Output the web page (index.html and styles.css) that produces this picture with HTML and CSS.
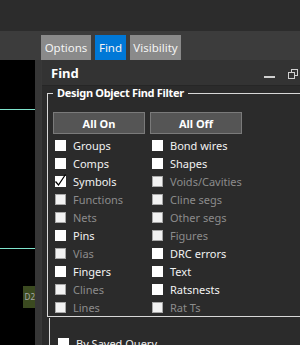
FILE: index.html
```html
<!DOCTYPE html>
<html lang="en">

<head>
    <meta charset="UTF-8">
    <meta name="viewport" content="width=device-width, initial-scale=1.0">
    <title>Find</title>
    <link rel="stylesheet" href="styles.css">
</head>

<body>
    <div class="topbar"></div>

    <!-- Tab strip -->
    <div class="tabbar">
        <div class="tab tab-options">Options</div>
        <div class="tab tab-find active">Find</div>
        <div class="tab tab-visibility">Visibility</div>
    </div>

    <div class="main">
        <!-- Design canvas -->
        <div class="canvas">
            <div class="trace trace-a"></div>
            <div class="trace trace-b"></div>
            <div class="ref">D2</div>
        </div>
        <div class="splitter"></div>

        <!-- Find panel -->
        <div class="panel">
            <div class="panel-head">
                <span class="panel-title">Find</span>
                <div class="panel-icons">
                    <svg width="11" height="12" viewBox="0 0 11 12">
                        <rect x="0" y="9" width="11" height="2" fill="#d0d0d0" />
                    </svg>
                    <svg width="10" height="12" viewBox="0 0 10 12">
                        <rect x="3.5" y="2.5" width="6" height="6" fill="none" stroke="#d0d0d0" />
                        <rect x="0.5" y="5.5" width="6" height="6" fill="#333" stroke="#d0d0d0" />
                    </svg>
                </div>
            </div>

            <div class="panel-body">
                <fieldset class="group">
                    <legend>Design Object Find Filter</legend>
                    <div class="buttons">
                        <button type="button">All On</button>
                        <button type="button">All Off</button>
                    </div>
                    <div class="filters">
                        <label class="row"><span class="box"></span>Groups</label>
                        <label class="row"><span class="box"></span>Bond wires</label>
                        <label class="row"><span class="box"></span>Comps</label>
                        <label class="row"><span class="box"></span>Shapes</label>
                        <label class="row"><span class="box checked"><svg width="13" height="13" viewBox="0 0 13 13"><path d="M1.5 7.5 L4.5 11 L11.5 0.5" fill="none" stroke="#000" stroke-width="1.3" /></svg></span>Symbols</label>
                        <label class="row off"><span class="box"></span>Voids/Cavities</label>
                        <label class="row off"><span class="box"></span>Functions</label>
                        <label class="row off"><span class="box"></span>Cline segs</label>
                        <label class="row off"><span class="box"></span>Nets</label>
                        <label class="row off"><span class="box"></span>Other segs</label>
                        <label class="row"><span class="box"></span>Pins</label>
                        <label class="row off"><span class="box"></span>Figures</label>
                        <label class="row off"><span class="box"></span>Vias</label>
                        <label class="row"><span class="box"></span>DRC errors</label>
                        <label class="row"><span class="box"></span>Fingers</label>
                        <label class="row"><span class="box"></span>Text</label>
                        <label class="row off"><span class="box"></span>Clines</label>
                        <label class="row"><span class="box"></span>Ratsnests</label>
                        <label class="row off"><span class="box"></span>Lines</label>
                        <label class="row off"><span class="box"></span>Rat Ts</label>
                    </div>
                </fieldset>

                <div class="query">
                    <label class="row"><span class="box"></span>By Saved Query</label>
                </div>
            </div>
        </div>
    </div>
</body>

</html>
```

FILE: styles.css
```css
body {
    font-family: 'Noto Sans', sans-serif;
    font-size: 11px;
    margin: 0;
    padding: 0;
    width: 300px;
    height: 345px;
    overflow: hidden;
    background: #2b2b2b;
    color: #f2f2f2;
}

.topbar {
    height: 31px;
    background: #2c2c2c;
}

.tabbar {
    height: 29px;
    background: #3c3c3c;
    display: flex;
    align-items: flex-end;
    gap: 4px;
    padding-left: 41px;
}

.tab {
    height: 25px;
    line-height: 25px;
    text-align: center;
    background: #8a8a8a;
    color: #f4f4f4;
    font-size: 11.5px;
}

.tab-options {
    width: 50px;
}

.tab-find {
    width: 31px;
}

.tab-visibility {
    width: 51px;
}

.tab.active {
    background: #0078d7;
}

.main {
    display: flex;
    height: 285px;
}

.canvas {
    width: 35px;
    background: #000;
    position: relative;
}

.trace {
    position: absolute;
    left: 0;
    right: 0;
    height: 1px;
    background: #7fe3cc;
}

.trace-a {
    top: 49px;
}

.trace-b {
    top: 188px;
}

.ref {
    position: absolute;
    left: 23px;
    top: 226px;
    width: 12px;
    height: 22px;
    background: #3b4a20;
    color: #a8a8a8;
    font-size: 8px;
    line-height: 22px;
    text-align: right;
}

.splitter {
    width: 6px;
    background: #363636;
}

.panel {
    flex: 1;
    overflow: hidden;
    background: #2b2b2b;
    border-left: 1px solid #383838;
}

.panel-head {
    height: 25px;
    border-bottom: 1px solid #262626;
    background: #333333;
    display: flex;
    align-items: center;
    padding-left: 9px;
}

.panel-title {
    font-weight: bold;
    font-size: 13px;
    color: #fff;
}

.panel-icons {
    margin-left: auto;
    display: flex;
    gap: 13px;
    padding-right: 2px;
}

.panel-body {
    padding-left: 5px;
}

.group {
    width: 300px;
    margin: 0;
    padding: 12px 0 0 5px;
    border: 1px solid #d8d8d8;
}

.group legend {
    padding: 0 4px;
    font-weight: bold;
    line-height: 14px;
    letter-spacing: -0.3px;
    color: #fff;
}

.buttons {
    display: flex;
    gap: 5px;
}

button {
    width: 92px;
    height: 22px;
    padding: 0;
    background: #555555;
    border: 1px solid #7a7a7a;
    color: #fff;
    font-family: inherit;
    font-size: 11px;
    font-weight: bold;
}

.filters {
    display: grid;
    grid-template-columns: 97px 97px;
    margin-top: 2px;
}

.row {
    height: 18px;
    display: flex;
    align-items: center;
    gap: 7px;
    padding-left: 2px;
    white-space: nowrap;
}

.row.off {
    color: #8c8c8c;
}

.box {
    width: 11px;
    height: 11px;
    background: #fff;
    box-sizing: border-box;
    position: relative;
    flex: none;
}

.row.off .box {
    border: 1px solid #a8a8a8;
    background: #f2f2f2;
}

.box svg {
    position: absolute;
    left: -1px;
    top: -2px;
}

.query {
    margin-left: 2px;
    margin-top: 1px;
    border-left: 1px solid #d8d8d8;
    padding: 16px 0 0 6px;
}
```
